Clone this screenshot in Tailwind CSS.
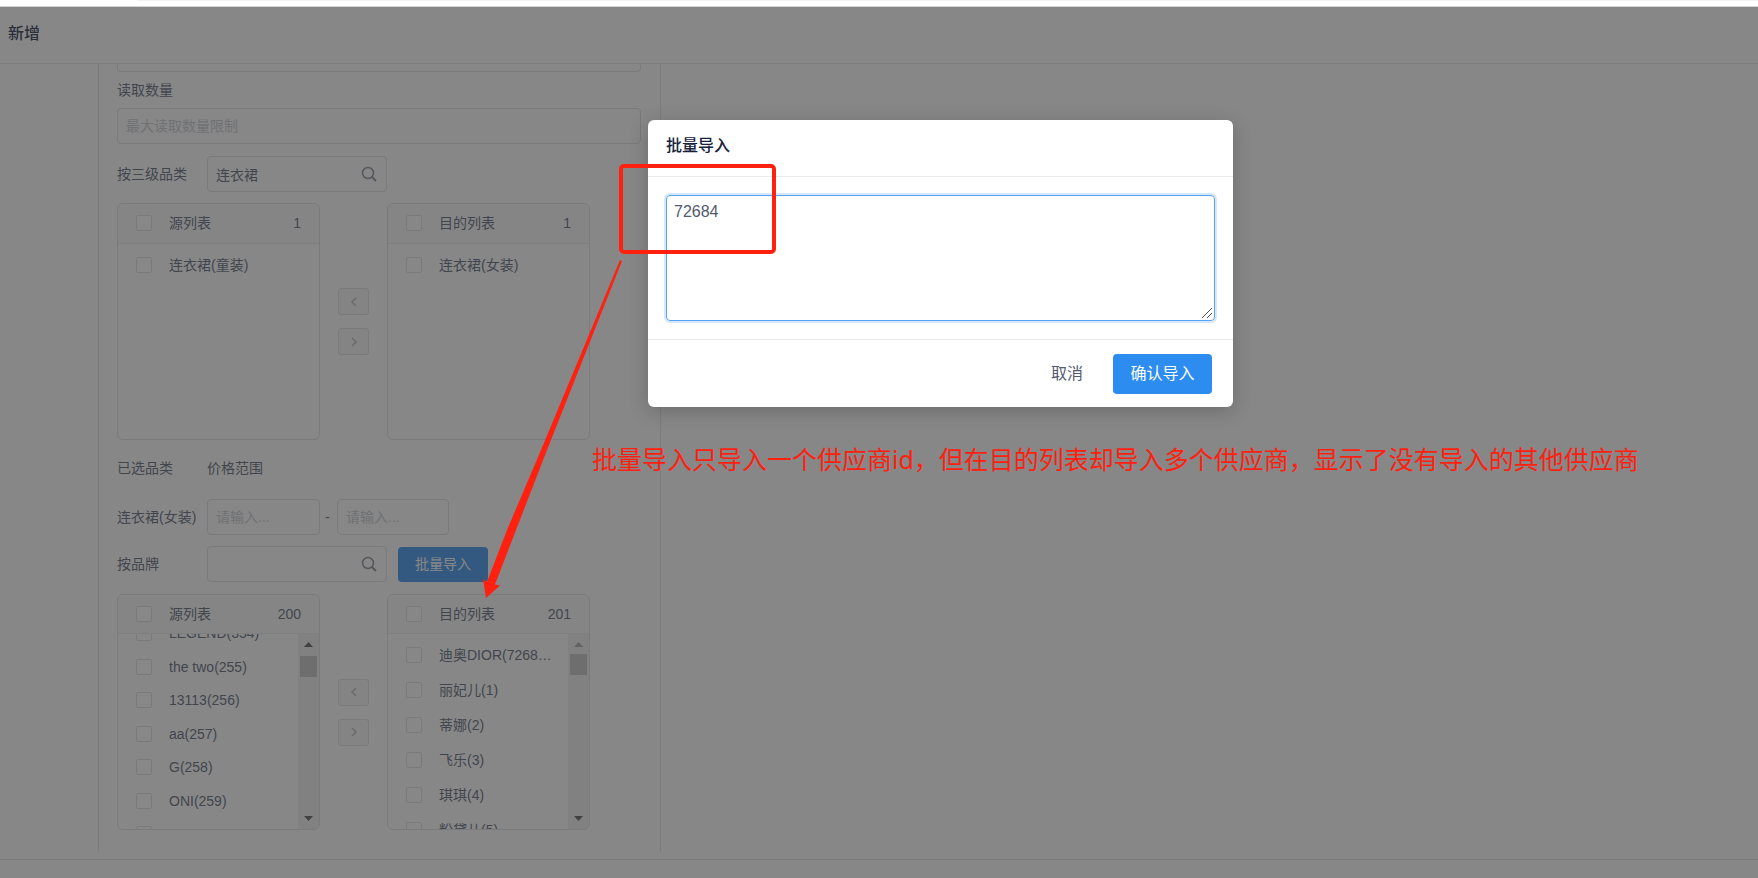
<!DOCTYPE html>
<html lang="zh-CN">
<head>
    <meta charset="UTF-8">
    <meta name="viewport" content="width=device-width, initial-scale=1.0">
    <title>新增</title>
    <script src="https://cdn.jsdelivr.net/npm/@tailwindcss/browser@4"></script>
</head>
<body class="relative flex flex-col min-h-screen overflow-x-hidden bg-white font-['Liberation_Sans','Noto_Sans_CJK_SC',sans-serif] text-sm text-[#515a6e]">
    <!-- Browser edge -->
    <div class="h-[7px] shrink-0 border-b border-[#d2d2d2] bg-white pl-[137px]">
        <div class="h-px rounded-bl bg-[#f1f3f4]"></div>
    </div>

    <div class="relative flex flex-1 flex-col">
        <header class="h-[57px] border-b border-[#e0e2e5] pl-2 pt-[15px]">
            <h1 class="text-base leading-6 font-medium text-[#17233d]">新增</h1>
        </header>

        <main class="ml-[98px] mb-[7px] w-[563px] flex-1 border-x border-[#e0e2e5] pl-[18px] pr-[19px] pb-[22px]">
            <div class="h-2 rounded-b border border-t-0 border-[#dcdee2]"></div>

            <label for="limit" class="block h-9 leading-9">读取数量</label>
            <input id="limit" type="text" placeholder="最大读取数量限制" class="block h-9 w-full rounded border border-[#dcdee2] px-2 placeholder-[#c5c8ce]">

            <!-- Category -->
            <div class="mt-3 flex items-center">
                <label for="category" class="w-[90px]">按三级品类</label>
                <div class="relative w-[180px]">
                    <input id="category" type="text" value="连衣裙" class="block h-9 w-full rounded border border-[#dcdee2] pl-2 pr-9">
                    <svg class="absolute right-[10px] top-[10px] h-4 w-4" viewBox="0 0 16 16" fill="none" stroke="#808695" stroke-width="1.5"><circle cx="7" cy="7" r="5.5"/><path stroke-width="2" d="M11 11l4 4"/></svg>
                </div>
            </div>

            <div class="mt-[11px] flex items-center">
                <section class="h-[237px] w-[203px] overflow-hidden rounded-md border border-[#dcdee2]">
                    <div class="flex h-10 items-center border-b border-[#e8eaec] bg-[#f9fafc] pl-[18px] pr-[18px] pb-px">
                        <label class="flex flex-1 items-center gap-[17px]"><input type="checkbox" class="h-4 w-4 appearance-none rounded-xs border border-[#dcdee2] bg-white">源列表</label>
                        <span>1</span>
                    </div>
                    <div class="pl-[18px] pt-[3px]">
                        <label class="flex h-[35px] items-center gap-[17px]"><input type="checkbox" class="h-4 w-4 appearance-none rounded-xs border border-[#dcdee2]">连衣裙(童装)</label>
                    </div>
                </section>
                <div class="flex flex-col gap-[13px] px-[18px]">
                    <button type="button" aria-label="移到左侧" class="flex h-[27px] w-[31px] items-center justify-center rounded-[3px] border border-[#dcdee2] bg-[#f7f7f7]"><svg class="h-3 w-3" viewBox="0 0 12 12" fill="none" stroke="#b5b9c0" stroke-width="1.6"><path d="M8 2L4 6l4 4"/></svg></button>
                    <button type="button" aria-label="移到右侧" class="flex h-[27px] w-[31px] items-center justify-center rounded-[3px] border border-[#dcdee2] bg-[#f7f7f7]"><svg class="h-3 w-3" viewBox="0 0 12 12" fill="none" stroke="#b5b9c0" stroke-width="1.6"><path d="M4 2l4 4-4 4"/></svg></button>
                </div>
                <section class="h-[237px] w-[203px] overflow-hidden rounded-md border border-[#dcdee2]">
                    <div class="flex h-10 items-center border-b border-[#e8eaec] bg-[#f9fafc] pl-[18px] pr-[18px] pb-px">
                        <label class="flex flex-1 items-center gap-[17px]"><input type="checkbox" class="h-4 w-4 appearance-none rounded-xs border border-[#dcdee2] bg-white">目的列表</label>
                        <span>1</span>
                    </div>
                    <div class="pl-[18px] pt-[3px]">
                        <label class="flex h-[35px] items-center gap-[17px]"><input type="checkbox" class="h-4 w-4 appearance-none rounded-xs border border-[#dcdee2]">连衣裙(女装)</label>
                    </div>
                </section>
            </div>

            <!-- Price range -->
            <div class="mt-[17px] flex h-[22px] items-center">
                <span class="w-[90px]">已选品类</span>
                <span>价格范围</span>
            </div>
            <div class="mt-5 flex items-center">
                <label for="minPrice" class="w-[90px]">连衣裙(女装)</label>
                <input id="minPrice" type="text" placeholder="请输入..." class="h-9 w-[113px] rounded border border-[#dcdee2] px-2 placeholder-[#c5c8ce]">
                <span class="w-[17px] pl-[5px]">-</span>
                <input id="maxPrice" type="text" aria-label="最高价格" placeholder="请输入..." class="h-9 w-28 rounded border border-[#dcdee2] px-2 placeholder-[#c5c8ce]">
            </div>

            <!-- Brand -->
            <div class="mt-[11px] flex items-center">
                <label for="brand" class="w-[90px]">按品牌</label>
                <div class="relative w-[180px]">
                    <input id="brand" type="text" class="block h-9 w-full rounded border border-[#dcdee2] pl-2 pr-9">
                    <svg class="absolute right-[10px] top-[10px] h-4 w-4" viewBox="0 0 16 16" fill="none" stroke="#808695" stroke-width="1.5"><circle cx="7" cy="7" r="5.5"/><path stroke-width="2" d="M11 11l4 4"/></svg>
                </div>
                <button type="button" class="ml-[11px] h-[35px] w-[90px] rounded bg-[#2d8cf0] text-white">批量导入</button>
            </div>

            <div class="mt-3 flex items-center">
                <section class="flex h-[236px] w-[203px] flex-col overflow-hidden rounded-md border border-[#dcdee2]">
                    <div class="flex h-[39px] shrink-0 items-center border-b border-[#e8eaec] bg-[#f9fafc] pl-[18px] pr-[18px] pb-px">
                        <label class="flex flex-1 items-center gap-[17px]"><input type="checkbox" class="h-4 w-4 appearance-none rounded-xs border border-[#dcdee2] bg-white">源列表</label>
                        <span>200</span>
                    </div>
                    <div class="flex min-h-0 flex-1">
                        <div class="flex-1 overflow-hidden pl-[18px]">
                            <div class="-mt-[18px]">
                                <label class="flex h-[34px] items-center gap-[17px]"><input type="checkbox" class="h-4 w-4 appearance-none rounded-xs border border-[#dcdee2]">LEGEND(354)</label>
                                <label class="flex h-[33px] items-center gap-[17px]"><input type="checkbox" class="h-4 w-4 appearance-none rounded-xs border border-[#dcdee2]">the two(255)</label>
                                <label class="flex h-[34px] items-center gap-[17px]"><input type="checkbox" class="h-4 w-4 appearance-none rounded-xs border border-[#dcdee2]">13113(256)</label>
                                <label class="flex h-[33px] items-center gap-[17px]"><input type="checkbox" class="h-4 w-4 appearance-none rounded-xs border border-[#dcdee2]">aa(257)</label>
                                <label class="flex h-[34px] items-center gap-[17px]"><input type="checkbox" class="h-4 w-4 appearance-none rounded-xs border border-[#dcdee2]">G(258)</label>
                                <label class="flex h-[33px] items-center gap-[17px]"><input type="checkbox" class="h-4 w-4 appearance-none rounded-xs border border-[#dcdee2]">ONI(259)</label>
                                <div class="flex h-[34px] items-center"><input type="checkbox" aria-label="260" class="h-4 w-4 appearance-none rounded-xs border border-[#dcdee2]"></div>
                            </div>
                        </div>
                        <div class="flex w-[21px] flex-col items-start bg-[#f1f1f1] py-2 pl-[2px]">
                            <svg class="ml-1 h-[5px] w-[9px]" viewBox="0 0 10 6" preserveAspectRatio="none"><path fill="#505050" d="M0 6l5-6 5 6z"/></svg>
                            <div class="mt-[9px] h-[21px] w-[17px] bg-[#c1c1c1]"></div>
                            <svg class="ml-1 mt-auto h-[5px] w-[9px]" viewBox="0 0 10 6" preserveAspectRatio="none"><path fill="#505050" d="M0 0l5 6 5-6z"/></svg>
                        </div>
                    </div>
                </section>
                <div class="flex flex-col gap-[13px] px-[18px]">
                    <button type="button" aria-label="移到左侧" class="flex h-[27px] w-[31px] items-center justify-center rounded-[3px] border border-[#dcdee2] bg-[#f7f7f7]"><svg class="h-3 w-3" viewBox="0 0 12 12" fill="none" stroke="#b5b9c0" stroke-width="1.6"><path d="M8 2L4 6l4 4"/></svg></button>
                    <button type="button" aria-label="移到右侧" class="flex h-[27px] w-[31px] items-center justify-center rounded-[3px] border border-[#dcdee2] bg-[#f7f7f7]"><svg class="h-3 w-3" viewBox="0 0 12 12" fill="none" stroke="#b5b9c0" stroke-width="1.6"><path d="M4 2l4 4-4 4"/></svg></button>
                </div>
                <section class="flex h-[236px] w-[203px] flex-col overflow-hidden rounded-md border border-[#dcdee2]">
                    <div class="flex h-[39px] shrink-0 items-center border-b border-[#e8eaec] bg-[#f9fafc] pl-[18px] pr-[18px] pb-px">
                        <label class="flex flex-1 items-center gap-[17px]"><input type="checkbox" class="h-4 w-4 appearance-none rounded-xs border border-[#dcdee2] bg-white">目的列表</label>
                        <span>201</span>
                    </div>
                    <div class="flex min-h-0 flex-1">
                        <div class="flex-1 overflow-hidden pl-[18px] pt-[3px]">
                            <label class="flex h-[35px] items-center gap-[17px] whitespace-nowrap"><input type="checkbox" class="h-4 w-4 shrink-0 appearance-none rounded-xs border border-[#dcdee2]">迪奥DIOR(7268…</label>
                            <label class="flex h-[35px] items-center gap-[17px]"><input type="checkbox" class="h-4 w-4 appearance-none rounded-xs border border-[#dcdee2]">丽妃儿(1)</label>
                            <label class="flex h-[35px] items-center gap-[17px]"><input type="checkbox" class="h-4 w-4 appearance-none rounded-xs border border-[#dcdee2]">蒂娜(2)</label>
                            <label class="flex h-[35px] items-center gap-[17px]"><input type="checkbox" class="h-4 w-4 appearance-none rounded-xs border border-[#dcdee2]">飞乐(3)</label>
                            <label class="flex h-[35px] items-center gap-[17px]"><input type="checkbox" class="h-4 w-4 appearance-none rounded-xs border border-[#dcdee2]">琪琪(4)</label>
                            <label class="flex h-[35px] items-center gap-[17px]"><input type="checkbox" class="h-4 w-4 appearance-none rounded-xs border border-[#dcdee2]">粉黛儿(5)</label>
                        </div>
                        <div class="flex w-[21px] flex-col items-start bg-[#f1f1f1] py-2 pl-[2px]">
                            <svg class="ml-1 h-[5px] w-[9px]" viewBox="0 0 10 6" preserveAspectRatio="none"><path fill="#a3a3a3" d="M0 6l5-6 5 6z"/></svg>
                            <div class="mt-[7px] h-[21px] w-[17px] bg-[#c1c1c1]"></div>
                            <svg class="ml-1 mt-auto h-[5px] w-[9px]" viewBox="0 0 10 6" preserveAspectRatio="none"><path fill="#505050" d="M0 0l5 6 5-6z"/></svg>
                        </div>
                    </div>
                </section>
            </div>
        </main>

        <footer class="h-[19px] border-t border-[#e0e2e5]"></footer>

        <!-- Mask -->
        <div class="absolute inset-0 bg-[#373737]/60"></div>
    </div>

    <!-- Import dialog -->
    <div role="dialog" aria-labelledby="dialogTitle" class="absolute left-[648px] top-[120px] w-[585px] rounded-md bg-white text-base shadow-[0_4px_20px_rgba(0,0,0,0.2)]">
        <div class="h-[57px] border-b border-[#e8eaec] px-[18px] pt-[14px]">
            <h2 id="dialogTitle" class="leading-6 font-medium text-[#17233d]">批量导入</h2>
        </div>
        <div class="relative p-[18px]">
            <textarea aria-label="供应商id" class="block h-[126px] w-full resize-none rounded border border-[#57a3f3] px-[7px] py-1 leading-6 shadow-[0_0_0_2px_rgba(45,140,240,0.2)] outline-none">72684</textarea>
            <svg class="pointer-events-none absolute right-5 bottom-5 h-3 w-3" viewBox="0 0 12 12" fill="none" stroke="#505050"><path d="M1 11L11 1M6 11l5-5"/></svg>
        </div>
        <div class="flex items-center justify-end border-t border-[#e8eaec] pt-[14px] pr-[21px] pb-[13px]">
            <button type="button" class="h-10 px-[30px]">取消</button>
            <button type="button" class="h-10 w-[99px] rounded bg-[#2d8cf0] text-white">确认导入</button>
        </div>
    </div>

    <!-- Annotations -->
    <div class="pointer-events-none absolute left-[619px] top-[164px] h-[90px] w-[157px] rounded-[5px] border-4 border-[#ff2010]"></div>
    <svg class="pointer-events-none absolute left-[480px] top-[258px] h-[342px] w-[144px]" viewBox="480 258 144 342"><path fill="#ff2010" d="M620 260l2 1L547 450 516 530 495 584.500l5 1L486 598l-3-19 4 3L507 530 541 450z"/></svg>
    <p class="pointer-events-none absolute left-[592px] top-[441px] whitespace-nowrap font-['Noto_Sans','Noto_Sans_CJK_SC',sans-serif] text-[25px] leading-9 text-[#ff2010]">批量导入只导入一个供应商id，但在目的列表却导入多个供应商，显示了没有导入的其他供应商</p>
</body>
</html>
